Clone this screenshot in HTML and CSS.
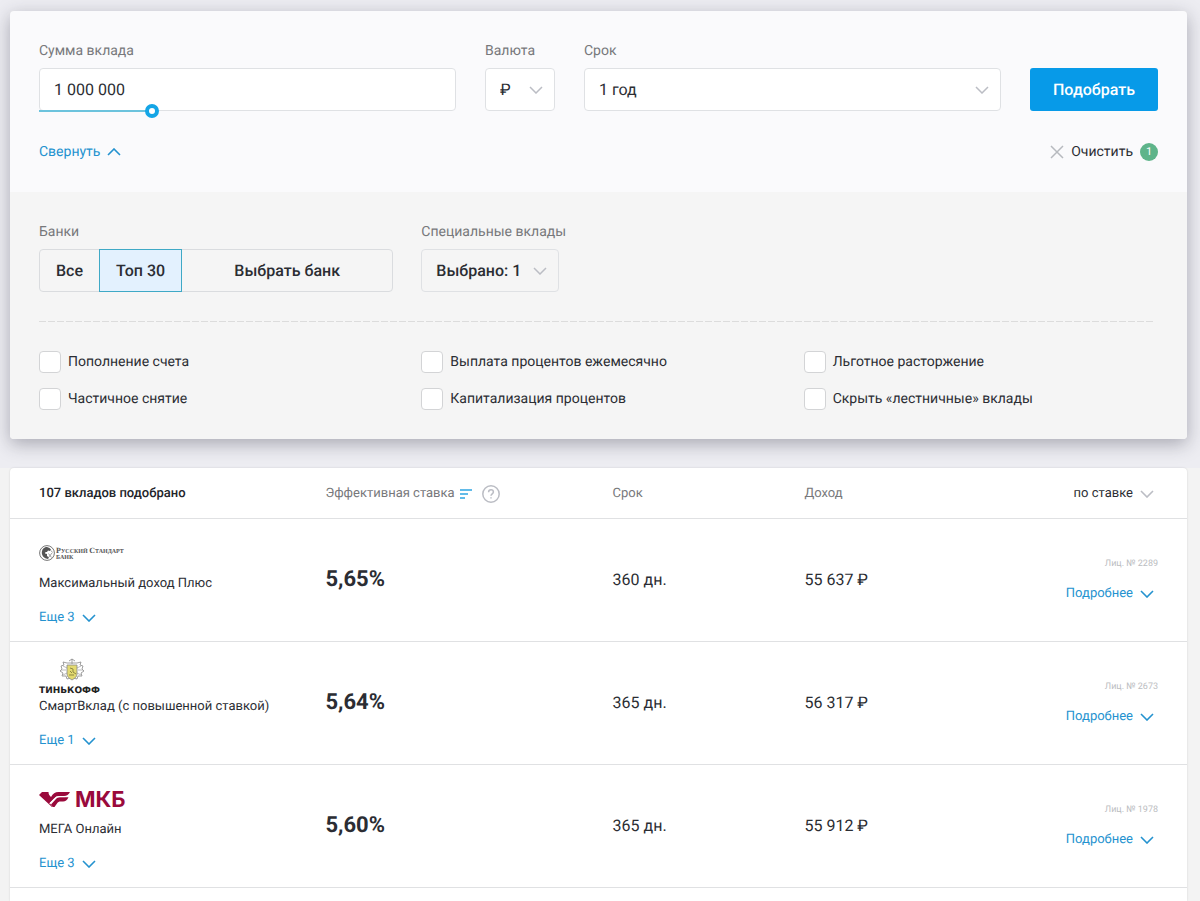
FILE: index.html
```html
<!DOCTYPE html>
<html lang="ru">

<head>
    <meta charset="UTF-8">
    <meta name="viewport" content="width=device-width, initial-scale=1.0">
    <title>Подбор вкладов</title>
    <link rel="stylesheet" href="styles.css">
</head>

<body>

    <header class="search">
        <form class="search-card">
            <div class="search-main">
                <div class="search-fields">
                    <div class="field">
                        <label for="amount">Сумма вклада</label>
                        <input type="text" id="amount" class="control" value="1 000 000">
                        <input type="range" class="amount-range" min="0" max="1000" value="262" aria-label="Сумма вклада">
                    </div>
                    <div class="field">
                        <label for="currency">Валюта</label>
                        <select id="currency" class="control">
                            <option>₽</option>
                            <option>$</option>
                            <option>€</option>
                        </select>
                    </div>
                    <div class="field">
                        <label for="term">Срок</label>
                        <select id="term" class="control">
                            <option>1 год</option>
                            <option>2 года</option>
                        </select>
                    </div>
                    <button type="submit" class="btn-submit">Подобрать</button>
                </div>
                <div class="search-links">
                    <button type="button" class="link-btn collapse">
                        Свернуть
                        <svg class="chevron" viewBox="0 0 14 8"><path d="M1 7l6-6 6 6"/></svg>
                    </button>
                    <button type="reset" class="clear">
                        <svg class="cross" viewBox="0 0 14 14"><path d="M1 1l12 12M13 1L1 13"/></svg>
                        Очистить
                        <span class="badge">1</span>
                    </button>
                </div>
            </div>

            <div class="search-extra">
                <div class="columns">
                    <div class="field">
                        <span class="label">Банки</span>
                        <div class="bank-group">
                            <button type="button">Все</button>
                            <button type="button" class="active">Топ 30</button>
                            <button type="button" class="wide">Выбрать банк</button>
                        </div>
                    </div>
                    <div class="field">
                        <label for="special">Специальные вклады</label>
                        <select id="special" class="control special">
                            <option>Выбрано: 1</option>
                        </select>
                    </div>
                </div>
                <div class="divider"></div>
                <div class="columns checks">
                    <label><input type="checkbox">Пополнение счета</label>
                    <label><input type="checkbox">Выплата процентов ежемесячно</label>
                    <label><input type="checkbox">Льготное расторжение</label>
                    <label><input type="checkbox">Частичное снятие</label>
                    <label><input type="checkbox">Капитализация процентов</label>
                    <label><input type="checkbox">Скрыть «лестничные» вклады</label>
                </div>
            </div>
        </form>
    </header>

    <main class="results">
        <table>
            <thead>
                <tr>
                    <th class="col-name found">107 вкладов подобрано</th>
                    <th class="col-rate">
                        <div class="rate-head">
                            <span>Эффективная ставка</span>
                            <svg class="sort-icon" viewBox="0 0 12 10"><path d="M0 1h12M0 5h8M0 9h5"/></svg>
                            <svg class="help-icon" viewBox="0 0 18 18"><circle cx="9" cy="9" r="8.2"/><path d="M6.6 7.2C6.6 5.7 7.6 4.8 9 4.8s2.4.9 2.4 2.2c0 1.9-2.4 1.9-2.4 3.8M9 12.200v1.4"/></svg>
                        </div>
                    </th>
                    <th class="col-term">Срок</th>
                    <th class="col-income">Доход</th>
                    <th class="col-more">
                        <button type="button" class="sort-btn">
                            по ставке
                            <svg class="chevron" viewBox="0 0 14 8"><path d="M1 1l6 6 6-6"/></svg>
                        </button>
                    </th>
                </tr>
            </thead>
            <tbody>
                <tr>
                    <td>
                        <div class="logo">
                            <svg width="90" height="18" viewBox="0 0 90 18">
                                <circle cx="8" cy="9" r="7.4" fill="#fff" stroke="#666" stroke-width=".9"/>
                                <path d="M3.500 5.500C5 3.500 6.500 3 8 3l2.500 1L12 5.500l-1 1.500-2-.5L8 8H6.500L6 9.500l2 .5v2l2 1.500-1 1.500-2-.5C4 13.500 1.500 10 3.500 5.500z" fill="#555"/>
                                <path d="M9.500 9.500l3 4M13 9l-3.500 4.500M12 6.500l1.500 2" stroke="#888" stroke-width=".8" fill="none"/>
                                <text x="17" y="9" class="rs-text"><tspan class="rs-cap">Р</tspan>УССКИЙ <tspan class="rs-cap">С</tspan>ТАНДАРТ</text>
                                <text x="17" y="15" class="rs-text">БАНК</text>
                            </svg>
                        </div>
                        <div class="deposit">Максимальный доход Плюс</div>
                        <button type="button" class="link-btn">Еще 3 <svg class="chevron" viewBox="0 0 14 8"><path d="M1 1l6 6 6-6"/></svg></button>
                    </td>
                    <td class="rate">5,65%</td>
                    <td class="value">360 дн.</td>
                    <td class="value">55 637 ₽</td>
                    <td class="more">
                        <div class="license">Лиц. № 2289</div>
                        <button type="button" class="link-btn">Подробнее <svg class="chevron" viewBox="0 0 14 8"><path d="M1 1l6 6 6-6"/></svg></button>
                    </td>
                </tr>
                <tr>
                    <td>
                        <div class="logo">
                            <svg width="68" height="36" viewBox="0 0 68 36">
                                <g fill="none" stroke="#888" stroke-width=".8">
                                    <path d="M30 3l3-2 3 2M33 1v5M28 5h10"/>
                                    <path d="M28 5l-4-1 1 3-3 1 1 3-2 2 3 2-1 3h4l1 3 4-1"/>
                                    <path d="M38 5l4-1-1 3 3 1-1 3 2 2-3 2 1 3h-4l-1 3-4-1"/>
                                    <path d="M24 8l4 2M22 12h5M24 17l4-2M42 8l-4 2M44 12h-5M42 17l-4-2" stroke="#aaa"/>
                                </g>
                                <path d="M28 7h10v9c0 3-2 4-5 6-3-2-5-3-5-6z" fill="#e3da70" stroke="#888" stroke-width=".8"/>
                                <path d="M31 10l3 1v3l3 2M30 17h5M31 13l2 2" stroke="#8d8743" stroke-width="1" fill="none"/>
                                <text x="0" y="35" class="tinkoff-text">ТИНЬКОФФ</text>
                            </svg>
                        </div>
                        <div class="deposit">СмартВклад (с повышенной ставкой)</div>
                        <button type="button" class="link-btn">Еще 1 <svg class="chevron" viewBox="0 0 14 8"><path d="M1 1l6 6 6-6"/></svg></button>
                    </td>
                    <td class="rate">5,64%</td>
                    <td class="value">365 дн.</td>
                    <td class="value">56 317 ₽</td>
                    <td class="more">
                        <div class="license">Лиц. № 2673</div>
                        <button type="button" class="link-btn">Подробнее <svg class="chevron" viewBox="0 0 14 8"><path d="M1 1l6 6 6-6"/></svg></button>
                    </td>
                </tr>
                <tr>
                    <td>
                        <div class="logo">
                            <svg width="90" height="18" viewBox="0 0 90 18">
                                <path d="M3 2h6.500c0 2 .8 3.500 2.500 5 2-3.500 4-5 7.500-5H31c-1.500 2.700-3 4-6 4h-5c-2 0-3.500.8-5 2.500L10.500 13 14 17h-1L0 5z" fill="#9a0a3c"/>
                                <path d="M12 14.500l4.500-5C17.800 8 19 7.300 21 7.300h8.500c-1.500 2.900-3 4.200-5.500 4.200h-2.500c-1.500 0-2.500.5-3.500 2L15.500 17H14z" fill="#9a0a3c"/>
                                <path d="M10.500 13.500l5-5c1.500-1.500 3-1.900 4.500-1.900h6" fill="none" stroke="#fff" stroke-width=".8"/>
                                <text x="36" y="17" class="mkb-text">МКБ</text>
                            </svg>
                        </div>
                        <div class="deposit">МЕГА Онлайн</div>
                        <button type="button" class="link-btn">Еще 3 <svg class="chevron" viewBox="0 0 14 8"><path d="M1 1l6 6 6-6"/></svg></button>
                    </td>
                    <td class="rate">5,60%</td>
                    <td class="value">365 дн.</td>
                    <td class="value">55 912 ₽</td>
                    <td class="more">
                        <div class="license">Лиц. № 1978</div>
                        <button type="button" class="link-btn">Подробнее <svg class="chevron" viewBox="0 0 14 8"><path d="M1 1l6 6 6-6"/></svg></button>
                    </td>
                </tr>
            </tbody>
        </table>
    </main>

</body>

</html>
```
FILE: styles.css
```css
* {
    box-sizing: border-box;
}

body {
    margin: 0;
    min-height: 100vh;
    display: flex;
    flex-direction: column;
    font-family: Roboto, sans-serif;
    font-size: 13px;
    text-rendering: geometricPrecision;
    color: #2b2d33;
    background-color: #f3f3f3;
}

button,
input,
select {
    font-family: inherit;
    color: inherit;
    text-rendering: inherit;
}

button {
    padding: 0;
    border: none;
    background: none;
    cursor: pointer;
}

.search {
    padding: 11px 13px 29px 10px;
    background-color: #ededf2;
}

.search-card {
    border-radius: 4px;
    overflow: hidden;
    background-color: #fafafc;
    box-shadow: 0 5px 18px rgba(40, 40, 60, 0.35);
}

.search-main {
    padding: 29px 29px 30px;
}

.search-fields {
    display: grid;
    grid-template-columns: 1fr 70px 1fr 128px;
    column-gap: 29px;
    align-items: start;
}

.field label,
.field .label {
    display: block;
    margin-bottom: 6px;
    line-height: 22px;
    font-size: 14px;
    color: #77787b;
}

.control {
    display: block;
    width: 100%;
    height: 43px;
    padding: 0 14px;
    border: 1px solid #dfe1e4;
    border-radius: 4px;
    background-color: #fff;
    font-size: 16px;
}

select.control {
    appearance: none;
    background-image: url("data:image/svg+xml,%3Csvg xmlns='http://www.w3.org/2000/svg' width='14' height='8' viewBox='0 0 14 8'%3E%3Cpath d='M1 1l6 6 6-6' fill='none' stroke='%23bbbdc4' stroke-width='1.5'/%3E%3C/svg%3E");
    background-repeat: no-repeat;
    background-position: right 11px center;
}

.amount-range {
    appearance: none;
    display: block;
    width: 100%;
    height: 14px;
    margin: -7px 0 0;
    background: linear-gradient(90deg, #6cc3dd 27%, transparent 27%) no-repeat center / 100% 2px;
}

.amount-range::-webkit-slider-thumb {
    appearance: none;
    width: 14px;
    height: 14px;
    border: 4px solid #14a5e6;
    border-radius: 50%;
    background-color: #fff;
}

.btn-submit {
    height: 43px;
    margin-top: 28px;
    border-radius: 3px;
    background-color: #079ae8;
    color: #fff;
    font-size: 16px;
    font-weight: 500;
}

.search-links {
    display: flex;
    justify-content: space-between;
    margin-top: 24px;
    line-height: 20px;
}

.chevron {
    width: 14px;
    height: 8px;
    fill: none;
    stroke: currentColor;
    stroke-width: 1.6;
}

.link-btn {
    display: inline-flex;
    align-items: center;
    gap: 7px;
    height: 20px;
    font-size: 13px;
    color: #2492cf;
}

.collapse {
    font-size: 14px;
}

.clear {
    display: flex;
    align-items: center;
    gap: 7px;
    height: 20px;
    font-size: 14px;
}

.cross {
    width: 14px;
    height: 14px;
    fill: none;
    stroke: #b7babf;
    stroke-width: 1.5;
}

.badge {
    width: 18px;
    border-radius: 50%;
    background-color: #5eb48a;
    color: #fff;
    font-size: 11px;
    line-height: 18px;
}

.search-extra {
    padding: 29px;
    background-color: #f5f5f5;
}

.columns {
    display: grid;
    grid-template-columns: repeat(3, 1fr);
    column-gap: 28px;
}

.bank-group {
    display: flex;
    height: 43px;
    border: 1px solid #dadcdf;
    border-radius: 4px;
}

.bank-group button {
    margin: -1px 0;
    padding: 0 16px;
    font-size: 16px;
    font-weight: 500;
}

.bank-group .active {
    border: 1px solid #3fa9c6;
    background-color: #e3f1fe;
}

.bank-group .wide {
    flex: 1;
}

.field .special {
    width: 138px;
    background-color: #f5f5f5;
    font-weight: 500;
}

.divider {
    height: 1px;
    margin: 29px 3px 29px 0;
    background: repeating-linear-gradient(90deg, #dcdcdc 0 7px, transparent 7px 9px);
}

.checks {
    row-gap: 15px;
}

.checks label {
    display: flex;
    align-items: center;
    gap: 7px;
    height: 22px;
    font-size: 14px;
}

.checks input {
    appearance: none;
    width: 22px;
    height: 22px;
    margin: 0;
    border: 1px solid #d3d4d6;
    border-radius: 4px;
    background-color: #fff;
}

.results {
    flex: 1;
    margin: 0 13px 0 10px;
    border-radius: 4px 4px 0 0;
    background-color: #fff;
    box-shadow: 0 0 2px rgba(0, 0, 0, 0.15);
}

table {
    width: 100%;
    table-layout: fixed;
    border-collapse: collapse;
}

.col-name {
    width: 26.8%;
}

.col-rate {
    width: 24.4%;
}

.col-term {
    width: 16.3%;
}

.col-income {
    width: 16.3%;
}

th {
    height: 50px;
    padding: 2px 0 0;
    border-bottom: 1px solid #e0e1e3;
    font-weight: 400;
    text-align: left;
    color: #77787b;
}

td {
    height: 123px;
    padding: 0;
    border-bottom: 1px solid #e0e1e3;
}

th:first-child,
td:first-child {
    padding-left: 29px;
}

th:last-child,
td:last-child {
    padding-right: 29px;
    text-align: right;
}

.results .found {
    font-weight: 500;
    color: #22242a;
}

.rate-head {
    display: flex;
    align-items: center;
}

.sort-icon {
    width: 12px;
    height: 10px;
    margin: 0 10px 0 5px;
    fill: none;
    stroke: #2fa5e2;
    stroke-width: 1.5;
}

.help-icon {
    width: 18px;
    height: 18px;
    fill: none;
    stroke: #bbbdc4;
    stroke-width: 1.5;
}

.sort-btn {
    display: inline-flex;
    align-items: center;
    gap: 7px;
    padding-right: 4px;
    font-size: 13px;
    color: #2b2d33;
}

.sort-btn .chevron {
    stroke: #bbbdc4;
}

.logo {
    display: flex;
    align-items: center;
    height: 42px;
}

.logo svg {
    overflow: visible;
}

.deposit {
    margin-bottom: 14px;
    line-height: 20px;
}

.rate {
    font-size: 22px;
    font-weight: 700;
}

.value {
    font-size: 16px;
}

.license {
    margin-bottom: 12px;
    font-size: 9px;
    line-height: 16px;
    color: #bbbdc1;
}

.more .link-btn {
    padding-right: 4px;
}

.rs-text {
    font: bold 6px "Liberation Serif", serif;
    fill: #555;
}

.rs-cap {
    font-size: 8px;
}

.tinkoff-text {
    font: bold 9px "DejaVu Sans", sans-serif;
    fill: #222;
}

.mkb-text {
    font: bold 22px Inter, sans-serif;
    fill: #9a0a3c;
}
```
